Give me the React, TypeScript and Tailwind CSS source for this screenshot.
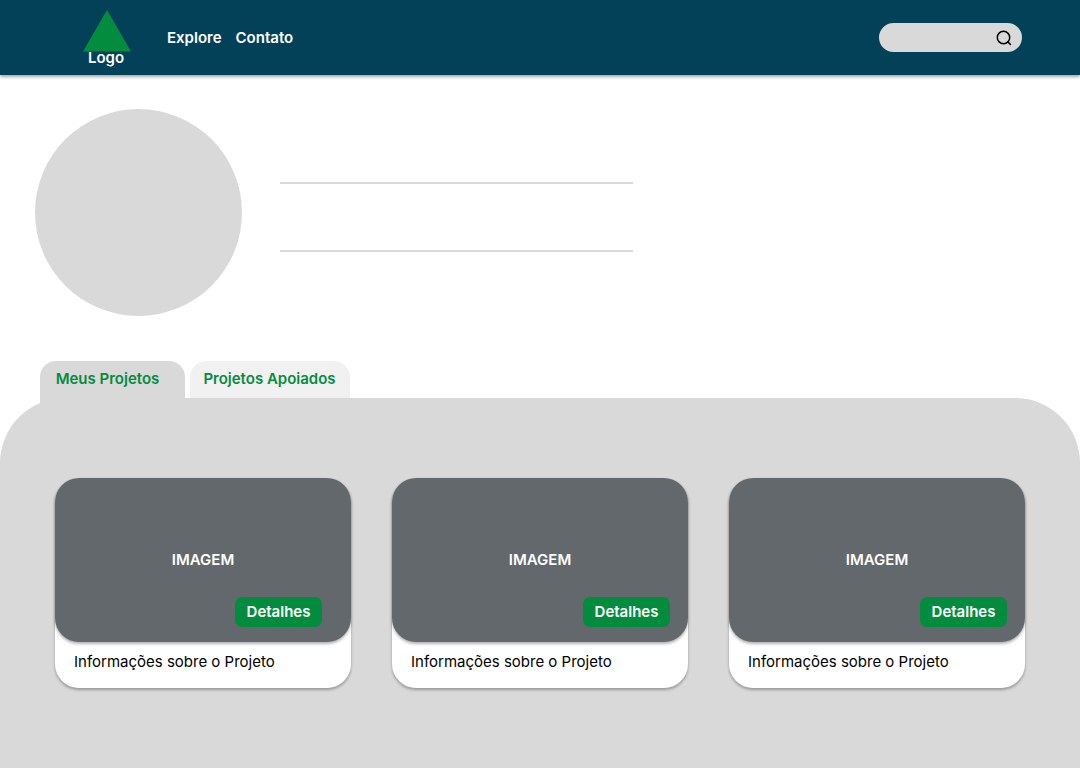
import { useState } from "react";

type Project = { id: number; info: string; buttonInset: string };

const projects: Project[] = [
  { id: 1, info: "Informações sobre o Projeto", buttonInset: "mr-[29px]" },
  { id: 2, info: "Informações sobre o Projeto", buttonInset: "mr-[18px]" },
  { id: 3, info: "Informações sobre o Projeto", buttonInset: "mr-[18px]" },
];

function Header() {
  return (
    <header className="flex h-[75px] items-center justify-between bg-[#034159] pr-[58px] pl-[83px] text-white shadow-[0_2px_3px_rgba(0,0,0,0.35)]">
      <div className="flex items-center">
        <a href="#inicio" className="flex w-12 flex-col items-center pt-0.5">
          <svg viewBox="0 0 48 42" className="h-[42px] w-12" aria-hidden="true">
            <path d="M24 0 48 41.5H0Z" fill="#038c3e" />
          </svg>
          <span className="-mt-1 mr-0.5 leading-5">Logo</span>
        </a>
        <nav className="ml-9 flex gap-[14px] leading-5">
          <a href="#explore">Explore</a>
          <a href="#contato">Contato</a>
        </nav>
      </div>
      <form
        role="search"
        onSubmit={(e) => e.preventDefault()}
        className="flex h-[29px] w-[143px] items-center rounded-full bg-[#d9d9d9] pr-[10px] pl-3 text-black"
      >
        <input
          type="search"
          aria-label="Buscar"
          className="min-w-0 flex-1 bg-transparent text-sm font-normal outline-none"
        />
        <button type="submit" aria-label="Buscar">
          <svg viewBox="0 0 16 16" className="mt-px block size-4" fill="none" stroke="currentColor" strokeWidth="1.5">
            <circle cx="7.5" cy="7.5" r="6.2" />
            <path d="m11.5 11.5 3.4 3.4" />
          </svg>
        </button>
      </form>
    </header>
  );
}

function Profile() {
  return (
    <section className="flex items-center gap-[38px] px-[35px] pt-[34px] pb-[45px]">
      <div className="size-[207px] shrink-0 rounded-full bg-[#d9d9d9]" />
      <div className="flex w-[353px] flex-col gap-[66px] pt-2">
        <div className="h-0.5 bg-[#d9d9d9]" />
        <div className="h-0.5 bg-[#d9d9d9]" />
      </div>
    </section>
  );
}

function ProjectCard({ project }: { project: Project }) {
  return (
    <article className="rounded-3xl bg-white shadow-[0_2px_3px_rgba(0,0,0,0.3)]">
      <div className="flex h-[164px] flex-col items-center justify-end rounded-3xl bg-[#63686c] pb-[15px] text-white shadow-[0_2px_3px_rgba(0,0,0,0.3)]">
        <span className="leading-5">IMAGEM</span>
        <button
          type="button"
          className={`mt-[27px] h-[30px] w-[87px] self-end rounded-[7px] bg-[#038c3e] leading-5 ${project.buttonInset}`}
        >
          Detalhes
        </button>
      </div>
      <p className="px-[19px] pt-[10px] pb-4 leading-5 font-normal text-black">{project.info}</p>
    </article>
  );
}

export default function App() {
  const [tab, setTab] = useState("meus");

  return (
    <div className="flex min-h-screen flex-col bg-white font-['Inter',sans-serif] text-[15px] font-semibold">
      <Header />
      <main className="flex flex-1 flex-col">
        <Profile />
        <div role="tablist" className="flex items-start gap-[5px] pl-10 text-[#038c3e]">
          <button
            type="button"
            role="tab"
            aria-selected={tab === "meus"}
            onClick={() => setTab("meus")}
            className="h-[42px] w-[145px] rounded-t-2xl bg-[#d9d9d9] pr-[10px] pb-[6px] leading-5"
          >
            Meus Projetos
          </button>
          <button
            type="button"
            role="tab"
            aria-selected={tab === "apoiados"}
            onClick={() => setTab("apoiados")}
            className="h-[37px] w-40 rounded-t-2xl bg-[#f1f1f1] pr-px pb-px leading-5"
          >
            Projetos Apoiados
          </button>
        </div>
        <section
          role="tabpanel"
          className="-mt-[5px] grid flex-1 grid-cols-3 items-start gap-[41px] rounded-t-[65px] bg-[#d9d9d9] px-[55px] py-20"
        >
          {projects.map((project) => (
            <ProjectCard key={project.id} project={project} />
          ))}
        </section>
      </main>
    </div>
  );
}
